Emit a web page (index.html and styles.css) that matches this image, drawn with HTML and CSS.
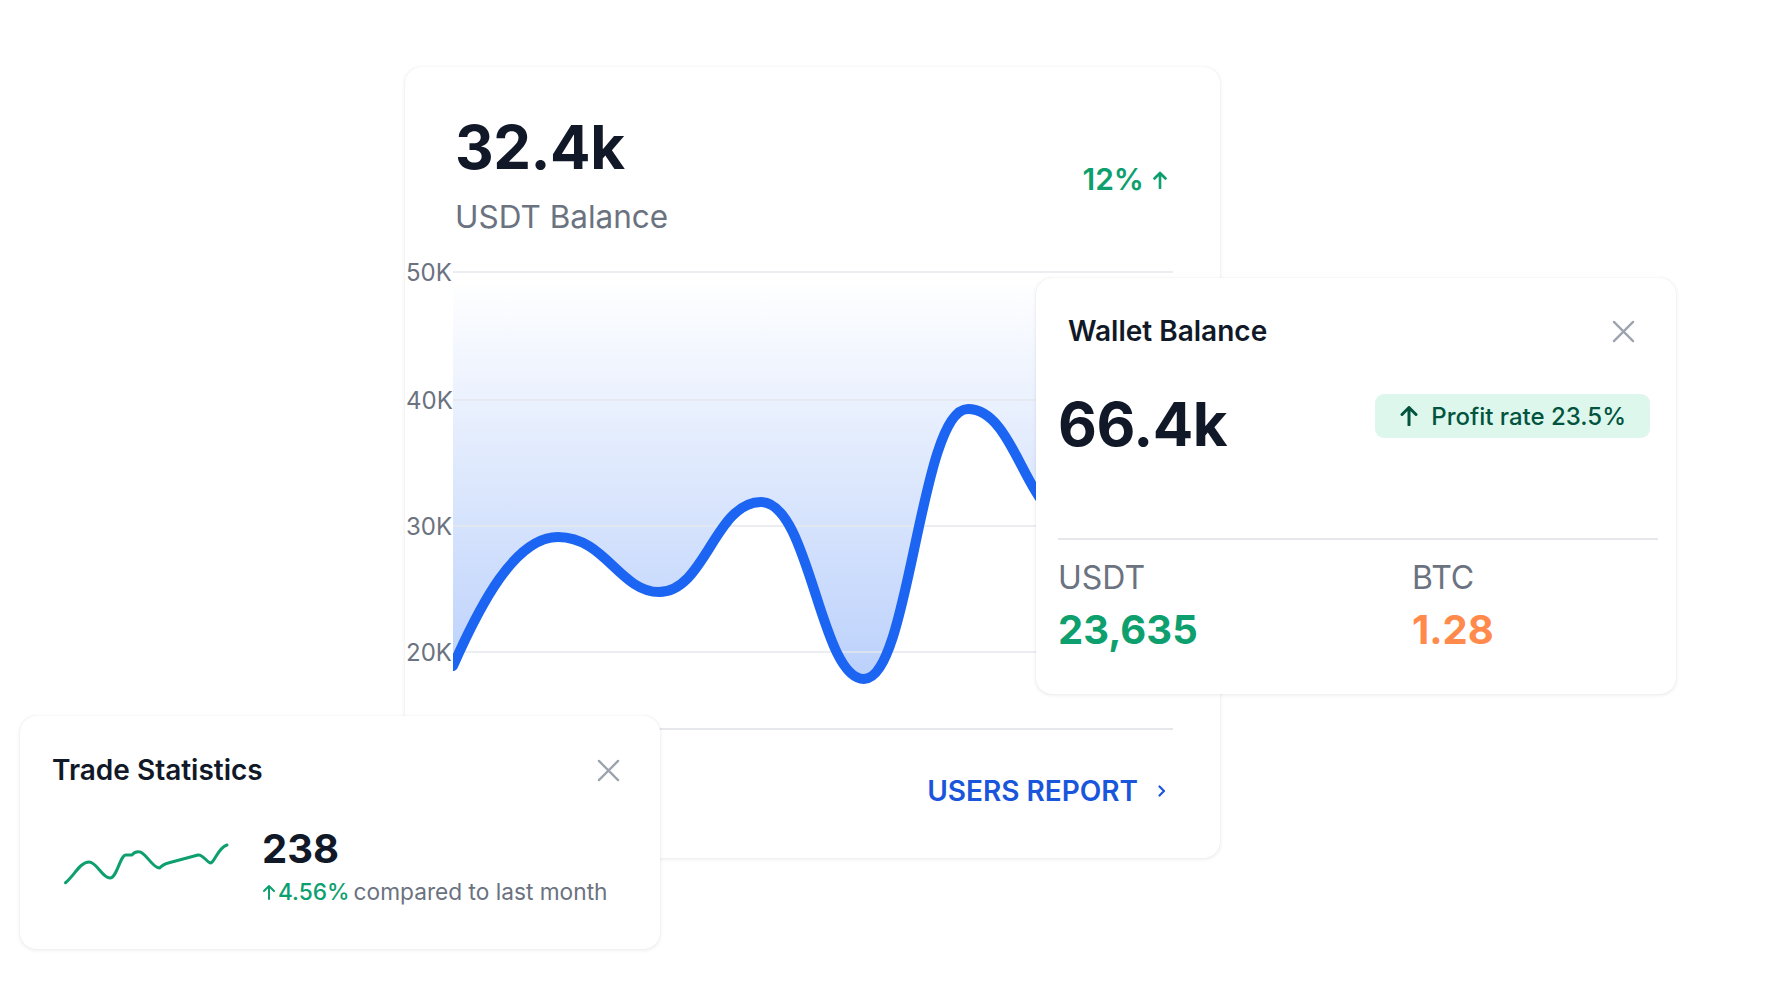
FILE: index.html
```html
<!DOCTYPE html>
<html lang="en">
<head>
<meta charset="utf-8">
<title>Dashboard widgets</title>
<link rel="stylesheet" href="styles.css">
</head>
<body>
<div class="stage">

  <section class="card main-card">
    <div class="main-head">
      <div class="main-head-left">
        <div class="big-value">32.4k</div>
        <div class="sub-label">USDT Balance</div>
      </div>
      <div class="trend">
        <span>12%</span>
        <svg class="trend-arrow" viewBox="0 0 16 18" width="16" height="18" aria-hidden="true">
          <path d="M8 17V2M2.5 7.5L8 2l5.5 5.5" fill="none" stroke="currentColor" stroke-width="2.6" stroke-linecap="round" stroke-linejoin="round"/>
        </svg>
      </div>
    </div>

    <svg class="chart" viewBox="0 0 770 468" width="770" height="468">
      <defs>
        <linearGradient id="areaFill" gradientUnits="userSpaceOnUse" x1="0" y1="20" x2="0" y2="420">
          <stop offset="0" stop-color="#1C64F2" stop-opacity="0"/>
          <stop offset="1" stop-color="#1C64F2" stop-opacity="0.3"/>
        </linearGradient>
        <clipPath id="plotClip">
          <rect x="48" y="0" width="722" height="468"/>
        </clipPath>
      </defs>
      <g clip-path="url(#plotClip)">
        <path d="M48,406 C75,345 110,277 153,277 C200,277 215,332 254,332 C300,332 310,242 356,242 C405,242 415,419 459,419 C505,419 515,149 563,149 C600,149 615,215 640,245 C660,270 700,300 730,280 L768,250 L768,12 L48,12 Z" fill="url(#areaFill)"/>
      </g>
      <g class="grid">
        <line x1="48" y1="12" x2="768" y2="12"/>
        <line x1="48" y1="140" x2="768" y2="140"/>
        <line x1="48" y1="266" x2="768" y2="266"/>
        <line x1="48" y1="392" x2="768" y2="392"/>
      </g>
      <g class="axis-labels">
        <text x="1" y="20.5">50K</text>
        <text x="1" y="148.5">40K</text>
        <text x="1" y="274.5">30K</text>
        <text x="1" y="400.5">20K</text>
      </g>
      <g clip-path="url(#plotClip)">
        <path d="M48,406 C75,345 110,277 153,277 C200,277 215,332 254,332 C300,332 310,242 356,242 C405,242 415,419 459,419 C505,419 515,149 563,149 C600,149 615,215 640,245 C660,270 700,300 730,280 L768,250" fill="none" stroke="#1C64F2" stroke-width="10" stroke-linecap="round" stroke-linejoin="round"/>
      </g>
    </svg>

    <div class="main-foot">
      <a class="report-link" href="#">USERS REPORT
        <svg class="chevron" viewBox="0 0 8 12" width="8" height="12" aria-hidden="true">
          <path d="M1.5 1.5L6 6l-4.5 4.5" fill="none" stroke="currentColor" stroke-width="2.2" stroke-linecap="round" stroke-linejoin="round"/>
        </svg>
      </a>
    </div>
  </section>

  <section class="card wallet-card">
    <div class="card-head wallet-head">
      <h2 class="card-title">Wallet Balance</h2>
      <svg class="close-icon" viewBox="0 0 24 24" width="24" height="24" aria-hidden="true">
        <path d="M2 2L22 22M22 2L2 22" fill="none" stroke="currentColor" stroke-width="2.4" stroke-linecap="round"/>
      </svg>
    </div>
    <div class="wallet-row">
      <div class="big-value">66.4k</div>
      <div class="profit-badge">
        <svg class="badge-arrow" viewBox="0 0 18 20" width="18" height="20" aria-hidden="true">
          <path d="M9 19V2M2 8.5L9 1.5l7 7" fill="none" stroke="currentColor" stroke-width="3" stroke-linecap="round" stroke-linejoin="round"/>
        </svg>
        <span>Profit rate 23.5%</span>
      </div>
    </div>
    <div class="divider"></div>
    <div class="wallet-stats">
      <div class="stat">
        <div class="stat-label">USDT</div>
        <div class="stat-value green">23,635</div>
      </div>
      <div class="stat">
        <div class="stat-label">BTC</div>
        <div class="stat-value orange">1.28</div>
      </div>
    </div>
  </section>

  <section class="card trade-card">
    <div class="card-head trade-head">
      <h2 class="card-title">Trade Statistics</h2>
      <svg class="close-icon" viewBox="0 0 24 24" width="24" height="24" aria-hidden="true">
        <path d="M2 2L22 22M22 2L2 22" fill="none" stroke="currentColor" stroke-width="2.4" stroke-linecap="round"/>
      </svg>
    </div>
    <div class="trade-body">
      <svg class="sparkline" viewBox="0 0 175 50" width="175" height="50" aria-hidden="true">
        <path d="M5.5,42.7 C14,36 20,22 29,22 C37,22 42,38 50,38 C57,38 60,15 66,15 L72,15 C74,12 76,11.5 79,11.7 C86,12 92,28 99.6,28 C103,24 106,23.5 110,22.5 L138,15 C143,14 147,23 151,23 C155,21 158,8 167,5" fill="none" stroke="#0E9F6E" stroke-width="3" stroke-linecap="round" stroke-linejoin="round"/>
      </svg>
      <div class="trade-text">
        <div class="trade-value">238</div>
        <div class="trade-sub">
          <span class="trade-change">
            <svg class="small-arrow" viewBox="0 0 14 16" width="14" height="16" aria-hidden="true">
              <path d="M7 15V2M2 7L7 2l5 5" fill="none" stroke="currentColor" stroke-width="2" stroke-linecap="round" stroke-linejoin="round"/>
            </svg>4.56%</span>
          <span class="trade-compare">compared to last month</span>
        </div>
      </div>
    </div>
  </section>

</div>
</body>
</html>
```
FILE: styles.css
```css
* {
  box-sizing: border-box;
}

html, body {
  margin: 0;
  padding: 0;
  background: #ffffff;
}

body {
  font-family: Inter, "Noto Sans", "Liberation Sans", sans-serif;
  color: #111928;
}

.stage {
  position: relative;
  width: 1777px;
  height: 994px;
  overflow: hidden;
}

.card {
  position: absolute;
  background: #ffffff;
  border-radius: 16px;
  box-shadow: 0 1px 4px rgba(17, 25, 40, 0.09), 0 0 1px rgba(17, 25, 40, 0.10);
}

/* ---------- main card ---------- */
.main-card {
  left: 405px;
  top: 67px;
  width: 815px;
  height: 791px;
  display: flex;
  flex-direction: column;
}

.main-head {
  display: flex;
  justify-content: space-between;
  align-items: flex-start;
  padding: 44px 52px 0 50px;
}

.big-value {
  font-size: 60px;
  line-height: 72px;
  font-weight: 700;
  color: #111928;
  letter-spacing: -0.5px;
}

.sub-label {
  margin-top: 16px;
  font-size: 31.5px;
  line-height: 36px;
  color: #6B7280;
}

.trend {
  margin-top: 50px;
  display: flex;
  align-items: center;
  gap: 8px;
  font-size: 30px;
  line-height: 36px;
  font-weight: 600;
  color: #0E9F6E;
}

.trend-arrow {
  display: block;
  margin-top: 2px;
}

.chart {
  display: block;
  margin-top: 25px;
  overflow: visible;
}

.grid line {
  stroke: #E5E7EB;
  stroke-width: 1.5;
}

.axis-labels text {
  font-family: Inter, "Noto Sans", sans-serif;
  font-size: 24px;
  fill: #6B7280;
}

.main-foot {
  margin: 0 47px 0 48px;
  border-top: 2px solid #E5E7EB;
  padding-top: 45px;
  padding-right: 7px;
  display: flex;
  justify-content: flex-end;
}

.report-link {
  display: flex;
  align-items: center;
  gap: 20px;
  font-size: 28px;
  line-height: 32px;
  font-weight: 600;
  color: #1A56DB;
  text-decoration: none;
}

.chevron {
  display: block;
}

/* ---------- shared card header ---------- */
.card-head {
  display: flex;
  justify-content: space-between;
  align-items: center;
}

.card-title {
  margin: 0;
  font-size: 28px;
  line-height: 34px;
  font-weight: 600;
  color: #111928;
}

.close-icon {
  display: block;
  color: #9CA3AF;
  width: 23px;
  height: 23px;
}

/* ---------- wallet card ---------- */
.wallet-card {
  left: 1036px;
  top: 278px;
  width: 640px;
  height: 416px;
}

.wallet-head {
  padding: 36px 41px 0 32px;
}

.wallet-row {
  display: flex;
  justify-content: space-between;
  align-items: flex-start;
  padding: 0 26px 0 22px;
  margin-top: 40px;
}

.profit-badge {
  margin-top: 6px;
  display: flex;
  align-items: center;
  gap: 13px;
  height: 44px;
  padding: 0 24px 0 25px;
  border-radius: 9px;
  background: #DEF7EC;
  color: #03543F;
  font-size: 24px;
  font-weight: 500;
}

.badge-arrow {
  display: block;
}

.divider {
  margin: 78px 18px 0 22px;
  height: 2px;
  background: #E5E7EB;
}

.wallet-stats {
  display: grid;
  grid-template-columns: 354px 1fr;
  padding: 0 22px 0 22px;
  margin-top: 20px;
}

.stat-label {
  font-size: 32px;
  line-height: 36px;
  color: #6B7280;
}

.stat-value {
  margin-top: 11px;
  font-size: 40px;
  line-height: 46px;
  font-weight: 700;
}

.green {
  color: #0E9F6E;
}

.orange {
  color: #FF8A4C;
}

/* ---------- trade card ---------- */
.trade-card {
  left: 20px;
  top: 716px;
  width: 640px;
  height: 233px;
}

.trade-head {
  padding: 37px 40px 0 32px;
}

.trade-body {
  display: flex;
  align-items: flex-start;
  padding-left: 40px;
  gap: 27px;
  margin-top: 38px;
}

.sparkline {
  display: block;
  margin-top: 15px;
}

.trade-value {
  font-size: 40px;
  line-height: 48px;
  font-weight: 700;
  color: #111928;
}

.trade-sub {
  margin-top: 5px;
  display: flex;
  align-items: center;
  gap: 4px;
  font-size: 22.7px;
  line-height: 28px;
}

.trade-change {
  display: flex;
  align-items: center;
  gap: 2px;
  color: #0E9F6E;
  font-weight: 500;
}

.small-arrow {
  display: block;
}

.trade-compare {
  color: #6B7280;
}
```
